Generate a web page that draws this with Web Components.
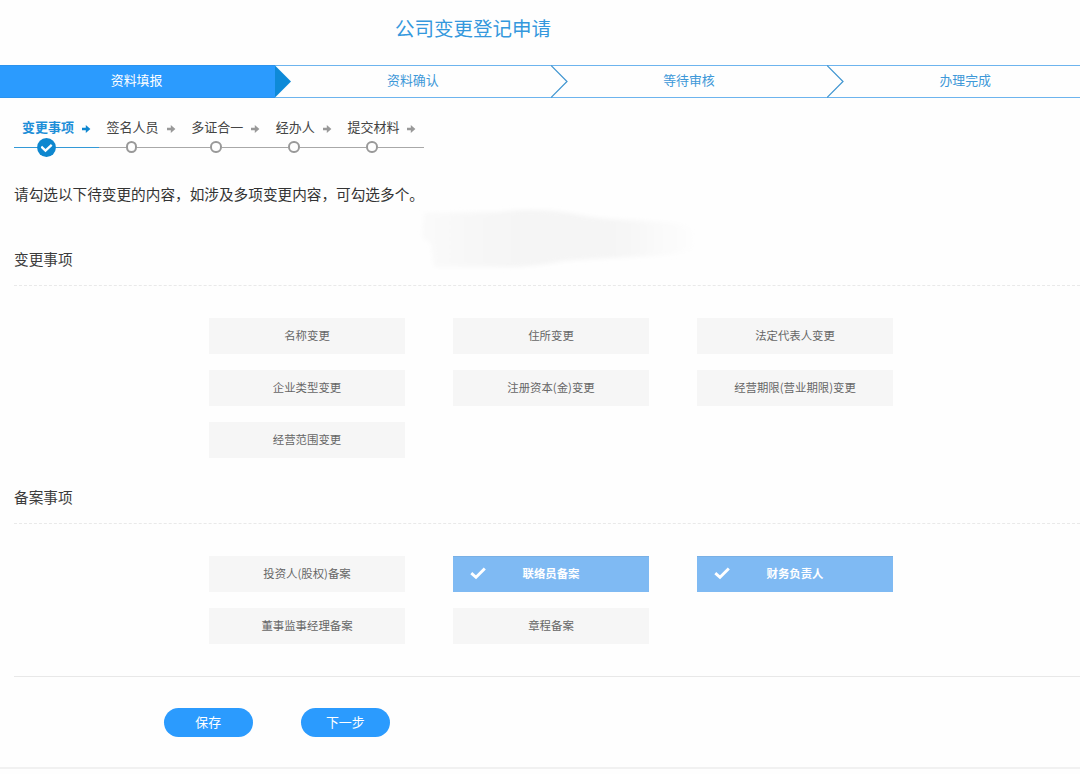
<!DOCTYPE html>
<html lang="zh-CN">
<head>
<meta charset="utf-8">
<title>公司变更登记申请</title>
<style>
html,body{margin:0;padding:0;background:#fefefe;}
body{width:1080px;height:774px;overflow:hidden;font-family:"Noto Sans CJK SC","Liberation Sans",sans-serif;color:#3a3a3a;}
</style>
</head>
<body>
<change-app></change-app>
<script>
function define(name, html){
  const t=document.createElement('template');
  t.innerHTML=html;
  customElements.define(name,class extends HTMLElement{
    constructor(){
      super();
      this.attachShadow({mode:'open'}).appendChild(t.content.cloneNode(true));
    }
  });
}

define('stage-item',`<style>
:host{position:relative;display:flex;flex:0 0 276.2px;box-sizing:border-box;height:33px;align-items:center;justify-content:center;border-top:1px solid #6db4ee;border-bottom:1px solid #6db4ee;color:#3d98d8;font-size:12.9px;line-height:20px;padding:0 1px 3px 0}
:host([active]){background:#2b9bfe;color:#fff;border-color:#2b93ee}
svg{position:absolute;left:100%;top:-1px;width:18px;height:33px;z-index:1;margin-left:-.5px}
path{fill:#fefefe;stroke:#3f95d0;stroke-width:1.2}
:host([active]) path{fill:#0e8ad8;stroke:none}
:host([last]) svg{display:none}
</style><span><slot></slot></span><svg viewBox="0 0 18 33"><path d="M0 .5L16 16.5L0 32.5"/></svg>`);

define('stage-bar',`<style>:host{display:flex;margin-left:-1px;width:1110px}</style><slot></slot>`);

define('sub-step',`<style>
:host{display:block;color:#444;--c:#999;font-size:13px;flex:none}
:host([active]){color:#1e8fd8;--c:#0f87d0;font-weight:700}
.top{display:flex;align-items:center;height:20px;padding:0 7.6px 0 8px;line-height:20px}
.arrow{width:10px;height:10px;margin:4px 0 0 7px;flex:none}
.arrow path{fill:var(--c)}
.rail{display:flex;align-items:center;height:20px}
.rail i{height:1px;background:var(--c);flex:1;opacity:.85}
.rail i:first-child{flex:0 0 calc(50% - 15.3px)}
.dot{width:7.5px;height:7.5px;border:2.5px solid #999;border-radius:50%;flex:none}
.check{display:none;width:19px;height:19px;flex:none}
:host([active]) .dot{display:none}
:host([active]) .check{display:block;margin:0 -3.2px 0 -3.8px}
</style>
<div class="top"><span><slot></slot></span><svg class="arrow" viewBox="0 0 10 10"><path d="M1 3.7H4.8V1L9.4 5L4.8 9V6.3H1Z"/></svg></div>
<div class="rail"><i></i><span class="dot"></span><svg class="check" viewBox="0 0 19 19"><circle cx="9.5" cy="9.5" r="9.4" fill="#0e87cf"/><path d="M4.3 8.6L8.5 12.6L14.7 6.9" fill="none" stroke="#fff" stroke-width="2.3"/></svg><i></i></div>`);

define('sub-steps',`<style>:host{display:flex;padding-left:14px}</style><slot></slot>`);

define('option-tile',`<style>
:host{position:relative;display:flex;align-items:center;justify-content:center;height:36px;box-sizing:border-box;padding:0 0 2px 0;background:#f6f6f6;color:#666;font-size:11.4px;line-height:18px}
:host([checked]){background:#7fbaf3;color:#fff;font-weight:700;box-shadow:inset 0 1px #79b0e5}
svg{display:none;position:absolute;left:17px;top:11px;width:16px;height:13px}
:host([checked]) svg{display:block}
</style><svg viewBox="0 0 16 13"><path d="M1.3 6.1L6 10.3L14.8 1.5" fill="none" stroke="#fff" stroke-width="2.9"/></svg><slot></slot>`);

define('option-section',`<style>
:host{display:block}
h2{margin:0 0 0 14px;height:40px;font-size:14.65px;line-height:26px;font-weight:400;color:#3c3c3c;box-sizing:border-box;border-bottom:1px dashed #e9e9e9}
.grid{display:grid;grid-template-columns:repeat(3,196px);column-gap:48px;row-gap:16px;padding:32px 0 0 209px}
</style><h2><slot name="heading"></slot></h2><div class="grid"><slot></slot></div>`);

define('pill-button',`<style>
:host{display:block;width:89.5px}
button{display:block;width:100%;height:29px;padding:0 0 2px 0;border:0;border-radius:15px;background:#2b9bfe;color:#fff;font:inherit;font-size:12.9px;line-height:27px}
</style><button><slot></slot></button>`);

define('soft-smudge',`<style>
:host{position:absolute;left:410px;top:200px;width:300px;height:80px;pointer-events:none}
svg{display:block}
</style><svg width="300" height="80" viewBox="0 0 300 80"><defs>
<linearGradient id="g"><stop offset="0" stop-color="#fafafa"/><stop offset=".35" stop-color="#f5f5f5"/><stop offset=".7" stop-color="#f5f5f5"/><stop offset="1" stop-color="#fefefe"/></linearGradient>
<filter id="b"><feGaussianBlur stdDeviation="2"/></filter></defs>
<path d="M14 13L88 12Q125 7 160 13Q190 20 222 20L264 23Q292 25 286 46Q280 54 240 56Q180 59 154 61Q120 68 88 67H24L21 43L12 38Z" fill="url(#g)" filter="url(#b)"/></svg>`);

define('change-app',`<style>
:host{position:relative;display:block;width:1080px;height:774px;overflow:hidden}
h1{margin:0;padding:13px 0 22px 395px;font-size:19.5px;line-height:30px;font-weight:400;color:#3498dd;height:30px}
sub-steps{margin-top:19px}
p{margin:25px 0 0 14px;font-size:14.65px;line-height:24px;color:#333;height:24px;white-space:nowrap}
.first{margin-top:40px}
.second{margin-top:26px}
.actions{display:flex;gap:47.5px;margin:32px 0 0 14px;padding:31px 0 30px 149.5px;border-top:1px solid #e8e8e8}
footer{height:2px;background:#f1f1f1}
</style>
<h1>公司变更登记申请</h1>
<stage-bar><stage-item active>资料填报</stage-item><stage-item>资料确认</stage-item><stage-item>等待审核</stage-item><stage-item last>办理完成</stage-item></stage-bar>
<sub-steps><sub-step active>变更事项</sub-step><sub-step>签名人员</sub-step><sub-step>多证合一</sub-step><sub-step>经办人</sub-step><sub-step>提交材料</sub-step></sub-steps>
<p>请勾选以下待变更的内容，如涉及多项变更内容，可勾选多个。</p>
<option-section class="first"><span slot="heading">变更事项</span>
<option-tile>名称变更</option-tile><option-tile>住所变更</option-tile><option-tile>法定代表人变更</option-tile>
<option-tile>企业类型变更</option-tile><option-tile>注册资本(金)变更</option-tile><option-tile>经营期限(营业期限)变更</option-tile>
<option-tile>经营范围变更</option-tile></option-section>
<option-section class="second"><span slot="heading">备案事项</span>
<option-tile>投资人(股权)备案</option-tile><option-tile checked>联络员备案</option-tile><option-tile checked>财务负责人</option-tile>
<option-tile>董事监事经理备案</option-tile><option-tile>章程备案</option-tile></option-section>
<div class="actions"><pill-button>保存</pill-button><pill-button>下一步</pill-button></div>
<footer></footer>
<soft-smudge></soft-smudge>`);
</script>
</body>
</html>
